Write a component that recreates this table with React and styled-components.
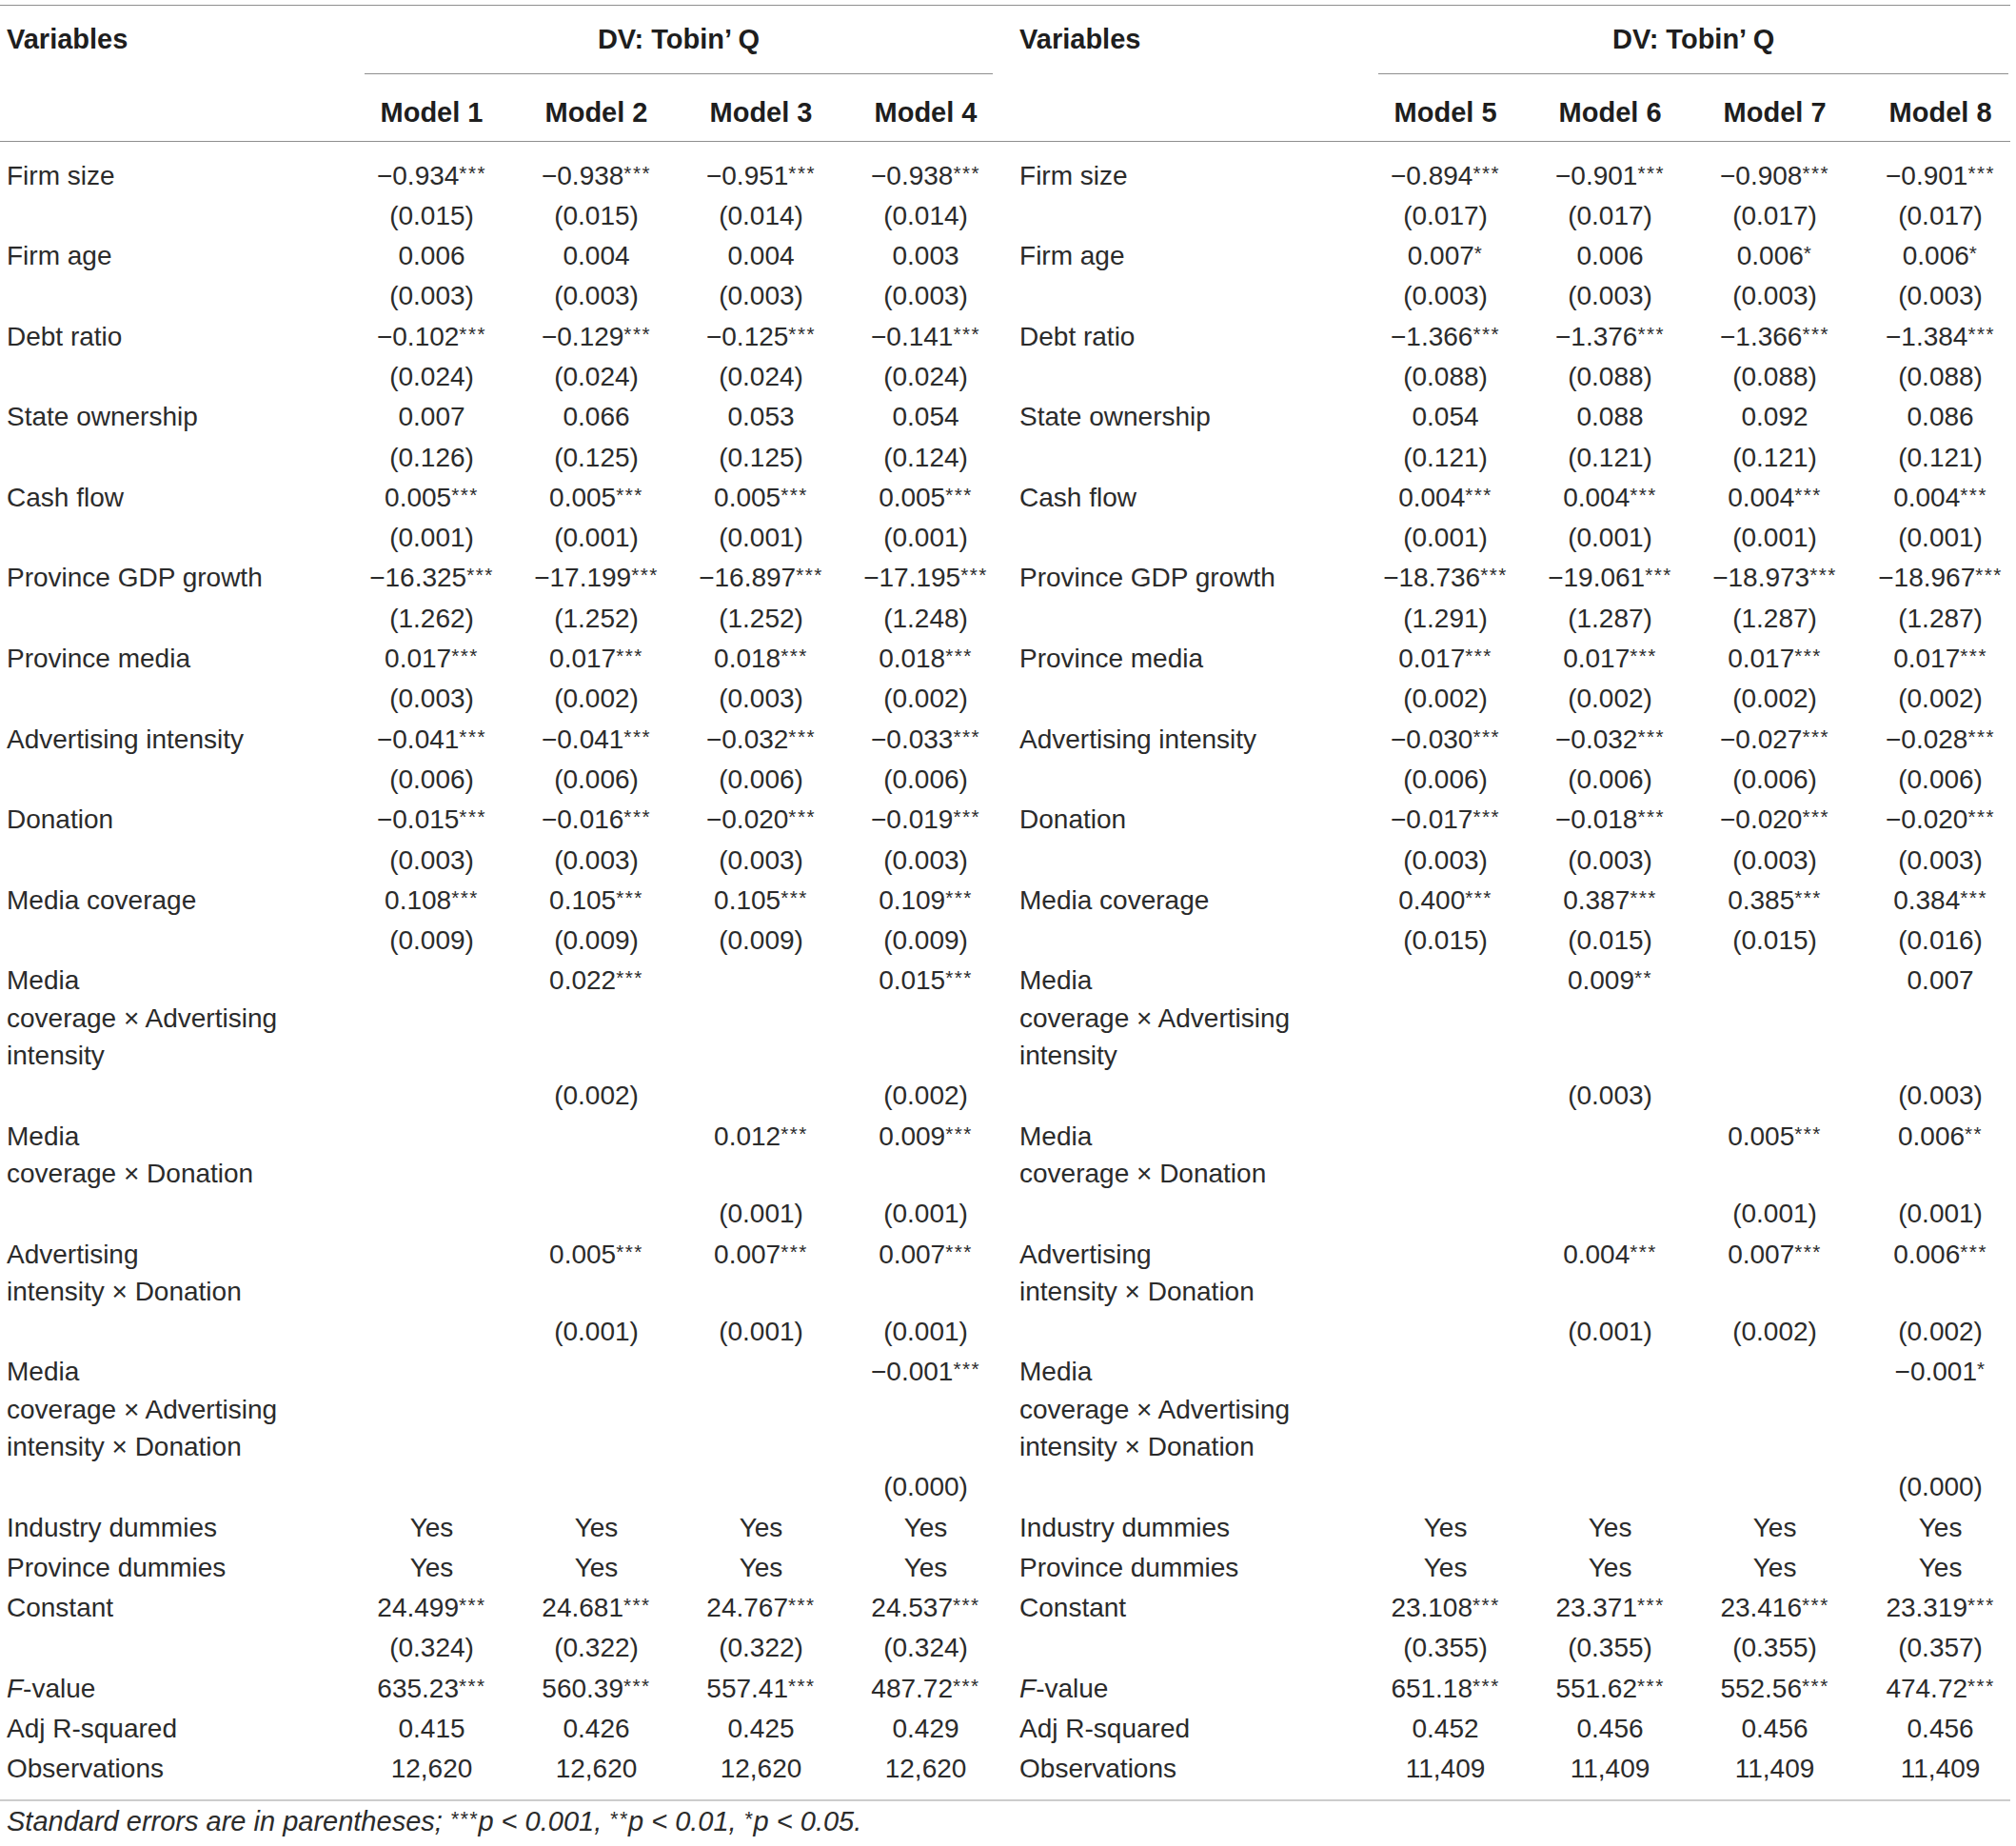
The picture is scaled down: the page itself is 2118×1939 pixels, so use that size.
import React from "react";
import styled, { createGlobalStyle } from "styled-components";

const Global = createGlobalStyle`
  html, body { margin: 0; padding: 0; background: #ffffff; }
`;

const Page = styled.div`
  width: 2112px;
  padding-top: 5px;
  font-family: "Liberation Sans", Arial, Helvetica, sans-serif;
  color: #2b2b2b;
`;

const Table = styled.table`
  width: 2112px;
  table-layout: fixed;
  border-collapse: collapse;
  border-top: 1px solid #8f8f8f;
  border-bottom: 2px solid #cccccc;
`;

const Col = styled.col`
  width: ${(p) => p.$w}px;
`;

const Head = styled.thead`
  border-bottom: 1px solid #8f8f8f;
  color: #1e1e1e;
`;

const VarHead = styled.th`
  text-align: left;
  vertical-align: top;
  font-weight: 700;
  font-size: 29px;
  line-height: 39px;
  padding: 15.5px 0 0 ${(p) => (p.$right ? 12 : 7)}px;
`;

const GroupCell = styled.th`
  vertical-align: top;
  padding: 15.5px ${(p) => (p.$last ? 2 : 16)}px 0 16px;
  font-weight: 700;
  font-size: 29px;
  line-height: 39px;
`;

const GroupLabel = styled.div`
  text-align: center;
  padding-bottom: 16.5px;
  border-bottom: 1px solid #8f8f8f;
`;

const ModelHead = styled.th`
  text-align: center;
  vertical-align: top;
  font-weight: 700;
  font-size: 29px;
  line-height: 39px;
  padding: 21px ${(p) => (p.$last ? 2 : 16)}px 10px 16px;
  white-space: nowrap;
`;

const Row = styled.tr`
  &:first-child td {
    padding-top: 15.5px;
  }
  &:last-child td {
    padding-bottom: 12px;
  }
`;

const LabelCell = styled.td`
  text-align: left;
  vertical-align: top;
  font-size: 28px;
  line-height: 39.3px;
  padding: 1.5px 0 1.5px ${(p) => (p.$right ? 12 : 7)}px;
  white-space: nowrap;
`;

const ValueCell = styled.td`
  text-align: center;
  vertical-align: top;
  font-size: 28px;
  line-height: 39.3px;
  padding: 1.5px ${(p) => (p.$last ? 2 : 16)}px 1.5px 16px;
  white-space: nowrap;
`;

const Stars = styled.sup`
  font-size: 0.74em;
  line-height: 0;
  vertical-align: 5px;
  letter-spacing: 1.5px;
`;

const Ital = styled.i`
  font-style: italic;
`;

const Footnote = styled.p`
  margin: 0;
  padding: 2px 0 0 7px;
  font-size: 29px;
  line-height: 39px;
  font-style: italic;
  color: #2b2b2b;
`;

const Y4 = ["Yes", "Yes", "Yes", "Yes"];
const rep = (v) => [v, v, v, v];

const rows = [
  {
    label: ["Firm size"],
    l: ["−0.934***", "−0.938***", "−0.951***", "−0.938***"],
    r: ["−0.894***", "−0.901***", "−0.908***", "−0.901***"],
    ls: ["(0.015)", "(0.015)", "(0.014)", "(0.014)"],
    rs: rep("(0.017)"),
  },
  {
    label: ["Firm age"],
    l: ["0.006", "0.004", "0.004", "0.003"],
    r: ["0.007*", "0.006", "0.006*", "0.006*"],
    ls: rep("(0.003)"),
    rs: rep("(0.003)"),
  },
  {
    label: ["Debt ratio"],
    l: ["−0.102***", "−0.129***", "−0.125***", "−0.141***"],
    r: ["−1.366***", "−1.376***", "−1.366***", "−1.384***"],
    ls: rep("(0.024)"),
    rs: rep("(0.088)"),
  },
  {
    label: ["State ownership"],
    l: ["0.007", "0.066", "0.053", "0.054"],
    r: ["0.054", "0.088", "0.092", "0.086"],
    ls: ["(0.126)", "(0.125)", "(0.125)", "(0.124)"],
    rs: rep("(0.121)"),
  },
  {
    label: ["Cash flow"],
    l: rep("0.005***"),
    r: rep("0.004***"),
    ls: rep("(0.001)"),
    rs: rep("(0.001)"),
  },
  {
    label: ["Province GDP growth"],
    l: ["−16.325***", "−17.199***", "−16.897***", "−17.195***"],
    r: ["−18.736***", "−19.061***", "−18.973***", "−18.967***"],
    ls: ["(1.262)", "(1.252)", "(1.252)", "(1.248)"],
    rs: ["(1.291)", "(1.287)", "(1.287)", "(1.287)"],
  },
  {
    label: ["Province media"],
    l: ["0.017***", "0.017***", "0.018***", "0.018***"],
    r: rep("0.017***"),
    ls: ["(0.003)", "(0.002)", "(0.003)", "(0.002)"],
    rs: rep("(0.002)"),
  },
  {
    label: ["Advertising intensity"],
    l: ["−0.041***", "−0.041***", "−0.032***", "−0.033***"],
    r: ["−0.030***", "−0.032***", "−0.027***", "−0.028***"],
    ls: rep("(0.006)"),
    rs: rep("(0.006)"),
  },
  {
    label: ["Donation"],
    l: ["−0.015***", "−0.016***", "−0.020***", "−0.019***"],
    r: ["−0.017***", "−0.018***", "−0.020***", "−0.020***"],
    ls: rep("(0.003)"),
    rs: rep("(0.003)"),
  },
  {
    label: ["Media coverage"],
    l: ["0.108***", "0.105***", "0.105***", "0.109***"],
    r: ["0.400***", "0.387***", "0.385***", "0.384***"],
    ls: rep("(0.009)"),
    rs: ["(0.015)", "(0.015)", "(0.015)", "(0.016)"],
  },
  {
    label: ["Media", "coverage × Advertising", "intensity"],
    l: ["", "0.022***", "", "0.015***"],
    r: ["", "0.009**", "", "0.007"],
    ls: ["", "(0.002)", "", "(0.002)"],
    rs: ["", "(0.003)", "", "(0.003)"],
  },
  {
    label: ["Media", "coverage × Donation"],
    l: ["", "", "0.012***", "0.009***"],
    r: ["", "", "0.005***", "0.006**"],
    ls: ["", "", "(0.001)", "(0.001)"],
    rs: ["", "", "(0.001)", "(0.001)"],
  },
  {
    label: ["Advertising", "intensity × Donation"],
    l: ["", "0.005***", "0.007***", "0.007***"],
    r: ["", "0.004***", "0.007***", "0.006***"],
    ls: ["", "(0.001)", "(0.001)", "(0.001)"],
    rs: ["", "(0.001)", "(0.002)", "(0.002)"],
  },
  {
    label: ["Media", "coverage × Advertising", "intensity × Donation"],
    l: ["", "", "", "−0.001***"],
    r: ["", "", "", "−0.001*"],
    ls: ["", "", "", "(0.000)"],
    rs: ["", "", "", "(0.000)"],
  },
  { label: ["Industry dummies"], l: Y4, r: Y4 },
  { label: ["Province dummies"], l: Y4, r: Y4 },
  {
    label: ["Constant"],
    l: ["24.499***", "24.681***", "24.767***", "24.537***"],
    r: ["23.108***", "23.371***", "23.416***", "23.319***"],
    ls: ["(0.324)", "(0.322)", "(0.322)", "(0.324)"],
    rs: ["(0.355)", "(0.355)", "(0.355)", "(0.357)"],
  },
  {
    label: ["F-value"],
    italicF: true,
    l: ["635.23***", "560.39***", "557.41***", "487.72***"],
    r: ["651.18***", "551.62***", "552.56***", "474.72***"],
  },
  {
    label: ["Adj R-squared"],
    l: ["0.415", "0.426", "0.425", "0.429"],
    r: ["0.452", "0.456", "0.456", "0.456"],
  },
  {
    label: ["Observations"],
    l: rep("12,620"),
    r: rep("11,409"),
  },
];

function Value({ v }) {
  const m = v.match(/^(.*?)(\*+)$/);
  if (!m) return <>{v}</>;
  return (
    <>
      {m[1]}
      <Stars>{m[2]}</Stars>
    </>
  );
}

function Label({ row }) {
  if (row.italicF) {
    return (
      <>
        <Ital>F</Ital>-value
      </>
    );
  }
  return row.label.map((line, i) => (
    <React.Fragment key={i}>
      {i > 0 && <br />}
      {line}
    </React.Fragment>
  ));
}

function ValueCells({ values, right }) {
  return values.map((v, i) => (
    <ValueCell key={i} $last={right && i === 3}>
      <Value v={v} />
    </ValueCell>
  ));
}

export default function App() {
  const bodyRows = [];
  rows.forEach((row, idx) => {
    bodyRows.push(
      <Row key={`c${idx}`}>
        <LabelCell>
          <Label row={row} />
        </LabelCell>
        <ValueCells values={row.l} />
        <LabelCell $right>
          <Label row={row} />
        </LabelCell>
        <ValueCells values={row.r} right />
      </Row>
    );
    if (row.ls) {
      bodyRows.push(
        <Row key={`s${idx}`}>
          <LabelCell />
          <ValueCells values={row.ls} />
          <LabelCell $right />
          <ValueCells values={row.rs} right />
        </Row>
      );
    }
  });

  return (
    <Page>
      <Global />
      <Table>
        <colgroup>
          <Col $w={367} />
          <Col $w={173} />
          <Col $w={173} />
          <Col $w={173} />
          <Col $w={173} />
          <Col $w={373} />
          <Col $w={173} />
          <Col $w={173} />
          <Col $w={173} />
          <Col $w={161} />
        </colgroup>
        <Head>
          <tr>
            <VarHead rowSpan={2}>Variables</VarHead>
            <GroupCell colSpan={4}>
              <GroupLabel>DV: Tobin’ Q</GroupLabel>
            </GroupCell>
            <VarHead rowSpan={2} $right>
              Variables
            </VarHead>
            <GroupCell colSpan={4} $last>
              <GroupLabel>DV: Tobin’ Q</GroupLabel>
            </GroupCell>
          </tr>
          <tr>
            <ModelHead>Model 1</ModelHead>
            <ModelHead>Model 2</ModelHead>
            <ModelHead>Model 3</ModelHead>
            <ModelHead>Model 4</ModelHead>
            <ModelHead>Model 5</ModelHead>
            <ModelHead>Model 6</ModelHead>
            <ModelHead>Model 7</ModelHead>
            <ModelHead $last>Model 8</ModelHead>
          </tr>
        </Head>
        <tbody>{bodyRows}</tbody>
      </Table>
      <Footnote>
        Standard errors are in parentheses; <Stars>***</Stars>p &lt; 0.001,{" "}
        <Stars>**</Stars>p &lt; 0.01, <Stars>*</Stars>p &lt; 0.05.
      </Footnote>
    </Page>
  );
}
